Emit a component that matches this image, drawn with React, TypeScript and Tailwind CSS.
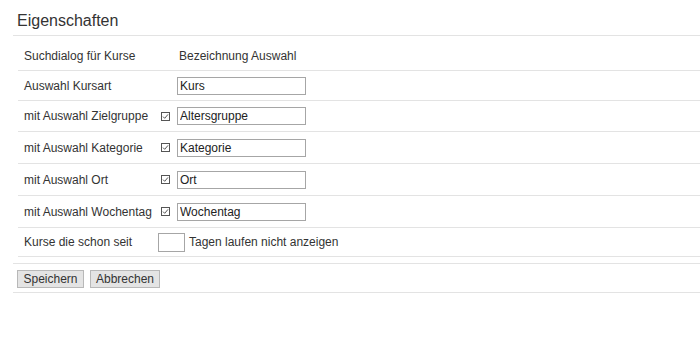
import React from "react";

function Check() {
  return (
    <svg width="9" height="9" viewBox="0 0 9 9" className="block">
      <rect x="0.5" y="0.5" width="8" height="8" fill="none" stroke="#555" strokeWidth="1" />
      <path d="M2 4.6 L3.7 6.3 L7 2.4" fill="none" stroke="#555" strokeWidth="1" />
    </svg>
  );
}

function Field({ value }: { value: string }) {
  return (
    <input
      readOnly
      defaultValue={value}
      className="w-[129px] h-[18px] border border-[#a6a6a6] px-[2px] text-[12px] text-[#222] bg-white outline-none font-['Liberation_Sans',Arial,sans-serif]"
    />
  );
}

function Row({
  h,
  label,
  checked,
  value,
}: {
  h: string;
  label: string;
  checked?: boolean;
  value: string;
}) {
  return (
    <div className={`flex items-center border-b border-[#e3e3e3] pl-[6px] ${h}`}>
      <div className="w-[131px]">{label}</div>
      <div className="w-[22px] pl-[6px]">{checked ? <Check /> : null}</div>
      <Field value={value} />
    </div>
  );
}

export default function App() {
  return (
    <div className="w-[700px] h-[350px] bg-white text-[12px] leading-[14px] text-[#333] font-['Liberation_Sans',Arial,sans-serif]">
      <div className="ml-[13px] h-[36px] pt-[11px] pl-[4px] border-b border-[#e3e3e3] text-[16px] leading-[20px] text-[#333]">
        Eigenschaften
      </div>
      <div className="ml-[18px]">
        <div className="flex items-center h-[35px] pt-[5px] border-b border-[#e3e3e3] pl-[6px]">
          <div className="w-[131px]">Suchdialog für Kurse</div>
          <div className="w-[22px]" />
          <div className="pl-[2px]">Bezeichnung Auswahl</div>
        </div>
        <div className="flex items-center h-[30px] border-b border-[#e3e3e3] pl-[6px]">
          <div className="w-[131px]">Auswahl Kursart</div>
          <div className="w-[22px]" />
          <Field value="Kurs" />
        </div>
        <Row h="h-[31px]" label="mit Auswahl Zielgruppe" checked value="Altersgruppe" />
        <Row h="h-[32px]" label="mit Auswahl Kategorie" checked value="Kategorie" />
        <Row h="h-[32px]" label="mit Auswahl Ort" checked value="Ort" />
        <Row h="h-[32px]" label="mit Auswahl Wochentag" checked value="Wochentag" />
        <div className="flex items-center h-[29px] border-b border-[#e3e3e3] pl-[6px]">
          <div className="w-[131px]">Kurse die schon seit</div>
          <input
            readOnly
            defaultValue=""
            className="ml-[3px] w-[27px] h-[19px] border border-[#a6a6a6] bg-white outline-none"
          />
          <div className="ml-[4px]">Tagen laufen nicht anzeigen</div>
        </div>
      </div>
      <div className="ml-[13px] mt-[6px] border-t border-b border-[#e3e3e3] pt-[6px] pb-[4px] pl-[4px] flex gap-[6px]">
        <button className="w-[67px] h-[18px] bg-[#e4e4e4] border border-[#b8b8b8] text-[12px] leading-[14px] text-[#333] font-['Liberation_Sans',Arial,sans-serif]">
          Speichern
        </button>
        <button className="w-[70px] h-[18px] bg-[#e4e4e4] border border-[#b8b8b8] text-[12px] leading-[14px] text-[#333] font-['Liberation_Sans',Arial,sans-serif]">
          Abbrechen
        </button>
      </div>
    </div>
  );
}
